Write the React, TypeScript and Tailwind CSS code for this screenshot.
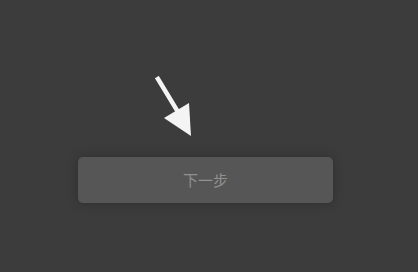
export default function App() {
  return (
    <div className="w-[418px] h-[272px] bg-[#3c3c3c] flex flex-col items-start overflow-hidden">
      {/* pointer arrow */}
      <div className="mt-[76px] ml-[154px] w-[40px] h-[62px]">
        <svg width="40" height="62" viewBox="0 0 40 62">
          <line x1="4" y1="3" x2="24" y2="36" stroke="#f4f4f4" strokeWidth="4.5" strokeLinecap="square" />
          <polygon points="10,42 35,27 37,60" fill="#f4f4f4" />
        </svg>
      </div>

      {/* next step button */}
      <button className="mt-[19px] ml-[78px] w-[255px] h-[46px] rounded-[5px] bg-[#565656] shadow-[0_0_12px_rgba(0,0,0,0.25)] text-[#919191] text-[15px] font-['Noto_Sans_CJK_SC',sans-serif]">
        下一步
      </button>
    </div>
  )
}
